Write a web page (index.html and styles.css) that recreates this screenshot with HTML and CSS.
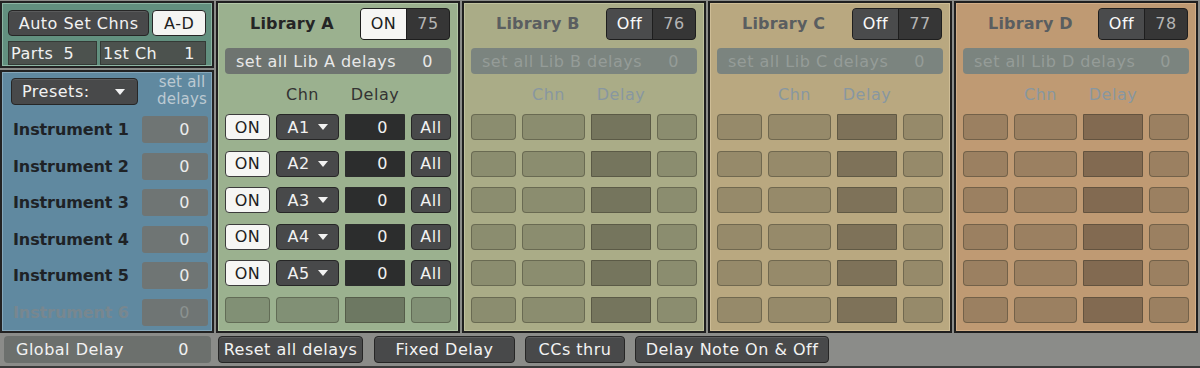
FILE: index.html
```html
<!DOCTYPE html>
<html lang="en">
<head>
    <meta charset="UTF-8">
    <title>Multi Library Delay</title>
    <link rel="stylesheet" href="styles.css">
</head>
<body>
    <div class="rack">
        <div class="main">
            <div class="left">
                <div class="setup">
                    <div class="setup-row">
                        <div class="btn wide">Auto Set Chns</div>
                        <div class="btn light ad">A-D</div>
                    </div>
                    <div class="setup-row">
                        <div class="field parts"><span>Parts</span><span>5</span></div>
                        <div class="field first"><span>1st Ch</span><span>1</span></div>
                    </div>
                </div>
                <div class="instruments">
                    <div class="presets-row">
                        <div class="btn presets">Presets: <svg width="10" height="6" viewBox="0 0 10 6"><path d="M0 0h10L5 6z" fill="#f2f2f2"/></svg></div>
                        <div class="setall-hint">set all<br>delays</div>
                    </div>
                    <div class="inst-list">
                        <div class="inst"><span class="inst-name">Instrument 1</span><span class="val">0</span></div>
                        <div class="inst"><span class="inst-name">Instrument 2</span><span class="val">0</span></div>
                        <div class="inst"><span class="inst-name">Instrument 3</span><span class="val">0</span></div>
                        <div class="inst"><span class="inst-name">Instrument 4</span><span class="val">0</span></div>
                        <div class="inst"><span class="inst-name">Instrument 5</span><span class="val">0</span></div>
                        <div class="inst off"><span class="inst-name">Instrument 6</span><span class="val">0</span></div>
                    </div>
                </div>
            </div>

            <div class="lib lib-a">
                <div class="lib-head">
                    <span class="lib-title">Library A</span>
                    <div class="toggle"><span class="tg on">ON</span><span class="tg-num">75</span></div>
                </div>
                <div class="setall"><span>set all Lib A delays</span><span>0</span></div>
                <div class="grid labels"><span></span><span>Chn</span><span>Delay</span><span></span></div>
                <div class="grid rows">
                    <span class="c on-btn">ON</span><span class="c chn">A1 <svg width="10" height="6" viewBox="0 0 10 6"><path d="M0 0h10L5 6z" fill="#f2f2f2"/></svg></span><span class="c dly">0</span><span class="c all">All</span>
                    <span class="c on-btn">ON</span><span class="c chn">A2 <svg width="10" height="6" viewBox="0 0 10 6"><path d="M0 0h10L5 6z" fill="#f2f2f2"/></svg></span><span class="c dly">0</span><span class="c all">All</span>
                    <span class="c on-btn">ON</span><span class="c chn">A3 <svg width="10" height="6" viewBox="0 0 10 6"><path d="M0 0h10L5 6z" fill="#f2f2f2"/></svg></span><span class="c dly">0</span><span class="c all">All</span>
                    <span class="c on-btn">ON</span><span class="c chn">A4 <svg width="10" height="6" viewBox="0 0 10 6"><path d="M0 0h10L5 6z" fill="#f2f2f2"/></svg></span><span class="c dly">0</span><span class="c all">All</span>
                    <span class="c on-btn">ON</span><span class="c chn">A5 <svg width="10" height="6" viewBox="0 0 10 6"><path d="M0 0h10L5 6z" fill="#f2f2f2"/></svg></span><span class="c dly">0</span><span class="c all">All</span>
                    <span class="c blank"></span><span class="c blank"></span><span class="c blank dk"></span><span class="c blank"></span>
                </div>
            </div>

            <div class="lib lib-b disabled">
                <div class="lib-head">
                    <span class="lib-title">Library B</span>
                    <div class="toggle"><span class="tg">Off</span><span class="tg-num">76</span></div>
                </div>
                <div class="setall"><span>set all Lib B delays</span><span>0</span></div>
                <div class="grid labels"><span></span><span>Chn</span><span>Delay</span><span></span></div>
                <div class="grid rows">
                    <span class="c blank"></span><span class="c blank"></span><span class="c blank dk"></span><span class="c blank"></span>
                    <span class="c blank"></span><span class="c blank"></span><span class="c blank dk"></span><span class="c blank"></span>
                    <span class="c blank"></span><span class="c blank"></span><span class="c blank dk"></span><span class="c blank"></span>
                    <span class="c blank"></span><span class="c blank"></span><span class="c blank dk"></span><span class="c blank"></span>
                    <span class="c blank"></span><span class="c blank"></span><span class="c blank dk"></span><span class="c blank"></span>
                    <span class="c blank"></span><span class="c blank"></span><span class="c blank dk"></span><span class="c blank"></span>
                </div>
            </div>

            <div class="lib lib-c disabled">
                <div class="lib-head">
                    <span class="lib-title">Library C</span>
                    <div class="toggle"><span class="tg">Off</span><span class="tg-num">77</span></div>
                </div>
                <div class="setall"><span>set all Lib C delays</span><span>0</span></div>
                <div class="grid labels"><span></span><span>Chn</span><span>Delay</span><span></span></div>
                <div class="grid rows">
                    <span class="c blank"></span><span class="c blank"></span><span class="c blank dk"></span><span class="c blank"></span>
                    <span class="c blank"></span><span class="c blank"></span><span class="c blank dk"></span><span class="c blank"></span>
                    <span class="c blank"></span><span class="c blank"></span><span class="c blank dk"></span><span class="c blank"></span>
                    <span class="c blank"></span><span class="c blank"></span><span class="c blank dk"></span><span class="c blank"></span>
                    <span class="c blank"></span><span class="c blank"></span><span class="c blank dk"></span><span class="c blank"></span>
                    <span class="c blank"></span><span class="c blank"></span><span class="c blank dk"></span><span class="c blank"></span>
                </div>
            </div>

            <div class="lib lib-d disabled">
                <div class="lib-head">
                    <span class="lib-title">Library D</span>
                    <div class="toggle"><span class="tg">Off</span><span class="tg-num">78</span></div>
                </div>
                <div class="setall"><span>set all Lib D delays</span><span>0</span></div>
                <div class="grid labels"><span></span><span>Chn</span><span>Delay</span><span></span></div>
                <div class="grid rows">
                    <span class="c blank"></span><span class="c blank"></span><span class="c blank dk"></span><span class="c blank"></span>
                    <span class="c blank"></span><span class="c blank"></span><span class="c blank dk"></span><span class="c blank"></span>
                    <span class="c blank"></span><span class="c blank"></span><span class="c blank dk"></span><span class="c blank"></span>
                    <span class="c blank"></span><span class="c blank"></span><span class="c blank dk"></span><span class="c blank"></span>
                    <span class="c blank"></span><span class="c blank"></span><span class="c blank dk"></span><span class="c blank"></span>
                    <span class="c blank"></span><span class="c blank"></span><span class="c blank dk"></span><span class="c blank"></span>
                </div>
            </div>
        </div>

        <div class="footer">
            <div class="global"><span>Global Delay</span><span>0</span></div>
            <div class="btn foot reset">Reset all delays</div>
            <div class="btn foot fixed">Fixed Delay</div>
            <div class="btn foot ccs">CCs thru</div>
            <div class="btn foot note">Delay Note On &amp; Off</div>
        </div>
    </div>
</body>
</html>
```

FILE: styles.css
```css
body {
    margin: 0;
    background: #8b8c89;
    font-family: "DejaVu Sans", sans-serif;
    font-size: 16px;
    letter-spacing: 0.5px;
    color: #f2f2f2;
}

.rack {
    width: 1200px;
    height: 368px;
    display: flex;
    flex-direction: column;
    border-bottom: 2px solid #3a3a3a;
    box-sizing: border-box;
}

.main {
    display: flex;
    gap: 2px;
    padding-top: 1px;
    height: 333px;
    box-sizing: border-box;
}

/* left column */

.left {
    width: 214px;
    display: flex;
    flex-direction: column;
    gap: 2px;
}

.setup {
    height: 67px;
    background: #62907f;
    border: 2px solid #222;
    box-shadow: inset 0 0 0 1px #8db6a4;
    box-sizing: border-box;
    padding: 7px 6px 0 6px;
    display: flex;
    flex-direction: column;
    gap: 5px;
}

.setup-row {
    display: flex;
    gap: 3px;
}

.btn {
    background: #48494a;
    border: 1px solid #262626;
    border-radius: 4px;
    box-shadow: inset 0 1px 0 #5a5b5c;
    display: flex;
    align-items: center;
    justify-content: center;
    white-space: nowrap;
}

.btn.wide {
    width: 142px;
    height: 26px;
    box-sizing: border-box;
}

.btn.light {
    background: #f4f4f2;
    color: #1e1e1e;
    box-shadow: none;
}

.ad {
    width: 54px;
    height: 26px;
    box-sizing: border-box;
}

.field {
    height: 24px;
    box-sizing: border-box;
    background: #4c524e;
    border: 1px solid #343a36;
    display: flex;
    align-items: center;
    justify-content: space-between;
    padding: 0 4px 0 2px;
}

.parts {
    width: 90px;
    justify-content: flex-start;
    gap: 10px;
}

.first {
    width: 107px;
    padding-right: 10px;
}

.instruments {
    flex: 1;
    background: #6089a0;
    border: 2px solid #222;
    box-shadow: inset 0 0 0 1px #86a8bb;
    box-sizing: border-box;
    padding: 6px 4px 0 9px;
}

.presets-row {
    display: flex;
    justify-content: space-between;
    align-items: flex-start;
}

.btn.presets {
    width: 127px;
    height: 27px;
    box-sizing: border-box;
    justify-content: space-between;
    padding: 0 12px 0 10px;
}

.setall-hint {
    color: #bccad2;
    font-size: 15px;
    letter-spacing: 0.2px;
    line-height: 17px;
    text-align: center;
    padding-right: 1px;
    margin-top: -4px;
}

.inst-list {
    display: flex;
    flex-direction: column;
    gap: 9.5px;
    margin-top: 8px;
}

.inst {
    height: 27px;
    display: flex;
    align-items: center;
    justify-content: space-between;
}

.inst-name {
    color: #1e2226;
    font-weight: bold;
    font-size: 16px;
    letter-spacing: -0.1px;
    margin-left: 2px;
}

.val {
    width: 66px;
    height: 27px;
    box-sizing: border-box;
    background: #6f7574;
    border-radius: 3px;
    display: flex;
    align-items: center;
    justify-content: flex-end;
    padding-right: 18px;
    color: #ececec;
}

.inst.off .inst-name {
    color: #78878f;
}

.inst.off .val {
    color: #8b9290;
}

/* library panels */

.lib {
    width: 244px;
    border: 2px solid #1f1f1f;
    box-sizing: border-box;
    padding: 5px 7px 0 7px;
}

.lib-a { background: #9bb18f; box-shadow: inset 0 0 0 1px #b4c8a8; }
.lib-b { background: #aaac87; box-shadow: inset 0 0 0 1px #c0c29e; }
.lib-c { background: #b9a880; box-shadow: inset 0 0 0 1px #cebd96; }
.lib-d { background: #bf9a73; box-shadow: inset 0 0 0 1px #d2ae88; }

.lib-head {
    height: 31px;
    display: flex;
    align-items: center;
    justify-content: space-between;
    padding-left: 25px;
    padding-right: 1px;
}

.lib-title {
    color: #252525;
    font-weight: bold;
    font-size: 16px;
    letter-spacing: 0.2px;
    margin-top: -1px;
}

.disabled .lib-title {
    color: #5a5e60;
}

.toggle {
    display: flex;
    height: 30px;
    border: 1px solid #1e1e1e;
    border-radius: 4px;
    overflow: hidden;
    background: #363636;
}

.tg {
    width: 45px;
    display: flex;
    align-items: center;
    justify-content: center;
    background: #4a4b4c;
    color: #fafafa;
    border-right: 1px solid #1e1e1e;
}

.tg.on {
    background: #f6f6f4;
    color: #202020;
}

.tg-num {
    width: 42px;
    display: flex;
    align-items: center;
    justify-content: center;
    color: #b4b4b4;
}

.setall {
    margin-top: 9px;
    height: 26px;
    background: #6e7470;
    border-radius: 4px;
    display: flex;
    align-items: center;
    justify-content: space-between;
    padding: 0 18px 0 11px;
    color: #e8e8e8;
}

.disabled .setall {
    background: #7b847f;
    color: #959c98;
}

.grid {
    display: grid;
    grid-template-columns: 45px 63px 60px 40px;
    column-gap: 6px;
}

.labels {
    height: 40px;
    align-items: center;
    text-align: center;
    color: #333;
}

.labels span:nth-child(2) {
    margin-left: -10px;
}

.disabled .labels {
    color: #8897a0;
}

.rows {
    grid-auto-rows: 26px;
    row-gap: 10.5px;
}

.c {
    box-sizing: border-box;
    border-radius: 4px;
    display: flex;
    align-items: center;
    justify-content: center;
}

.on-btn {
    background: #f6f6f4;
    color: #1e1e1e;
    border: 1px solid #3c3c3c;
}

.chn {
    background: #48494a;
    border: 1px solid #262626;
    gap: 8px;
}

.dly {
    background: #2c2d2d;
    border-radius: 1px;
    justify-content: flex-end;
    padding-right: 17px;
}

.all {
    background: #48494a;
    border: 1px solid #262626;
}

.blank {
    background: rgba(60, 60, 50, 0.28);
    border: 1px solid rgba(40, 40, 30, 0.35);
}

.blank.dk {
    background: rgba(45, 40, 35, 0.42);
    border-radius: 1px;
}

/* footer */

.footer {
    flex: 1;
    display: flex;
    align-items: center;
    gap: 7px;
    padding-left: 4px;
}

.global {
    width: 207px;
    height: 27px;
    box-sizing: border-box;
    background: #6c706d;
    border-radius: 4px;
    display: flex;
    align-items: center;
    justify-content: space-between;
    padding: 0 22px 0 12px;
}

.btn.foot {
    height: 27px;
    box-sizing: border-box;
}

.reset { width: 145px; }
.fixed { width: 141px; margin-left: 4px; }
.ccs { width: 100px; margin-left: 3px; }
.note { width: 194px; margin-left: 3px; }
```
